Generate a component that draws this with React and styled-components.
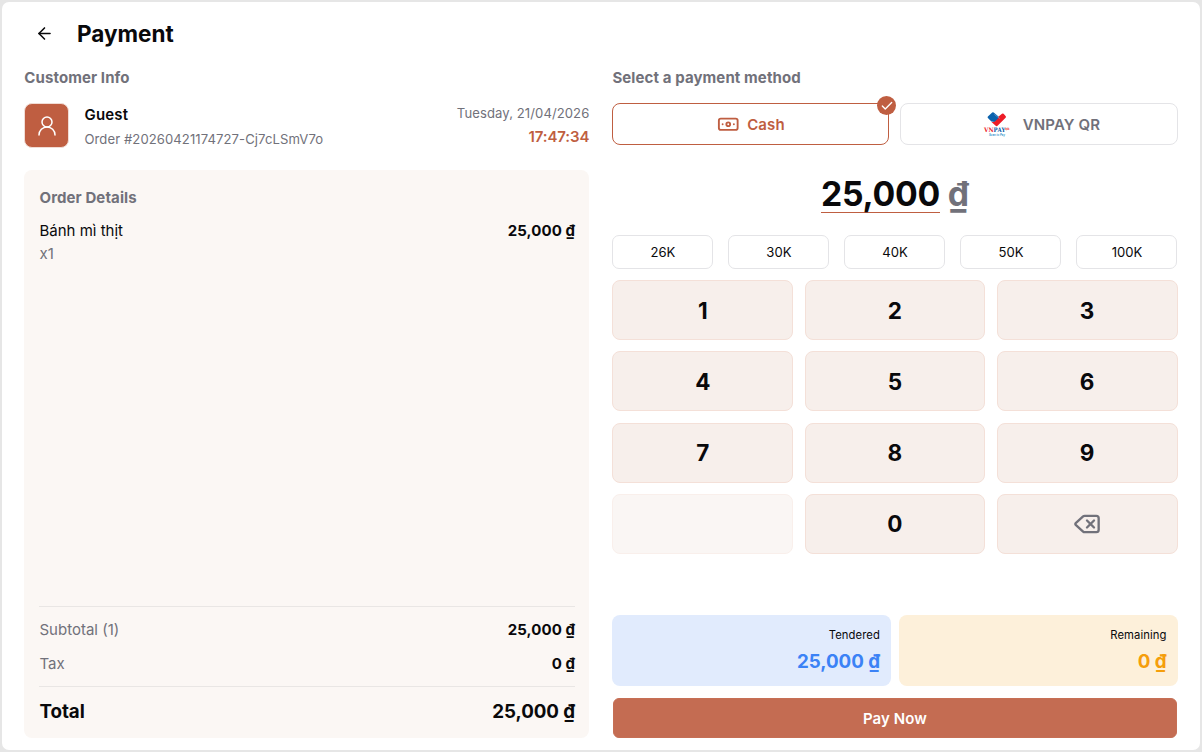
import styled, { createGlobalStyle } from "styled-components";
import { ArrowLeft, Banknote, Check, Delete, UserRound } from "lucide-react";

const GlobalStyle = createGlobalStyle`
  * {
    box-sizing: border-box;
  }
  body {
    margin: 0;
    background: #e6e6e6;
    font-family: Inter, "Liberation Sans", sans-serif;
    color: #09090b;
  }
  button {
    font-family: inherit;
    color: inherit;
    padding: 0;
  }
`;

const Page = styled.main`
  height: 752px;
  padding: 1.5px 2px 2px 1.5px;
`;

const Panel = styled.div`
  height: 100%;
  padding: 0 22.5px 12px 22.8px;
  border-radius: 7px;
  background: #fff;
  display: flex;
  flex-direction: column;
`;

const Header = styled.header`
  height: 64.5px;
  padding-left: 11px;
  display: flex;
  align-items: center;
  gap: 22.7px;
`;

const BackButton = styled.button`
  display: flex;
  border: 0;
  background: none;
`;

const Title = styled.h1`
  margin: 0;
  font-size: 22.5px;
  line-height: 30px;
  font-weight: 700;
`;

const Columns = styled.div`
  flex: 1;
  min-height: 0;
  display: grid;
  grid-template-columns: 1fr 1fr;
  gap: 23px;
`;

const Column = styled.section`
  display: flex;
  flex-direction: column;
  min-width: 0;
`;

const SectionTitle = styled.h2`
  margin: 0;
  font-size: 15px;
  line-height: 23px;
  font-weight: 700;
  letter-spacing: 0.1px;
  color: #71717a;
`;

const Customer = styled.div`
  display: flex;
  align-items: center;
  margin-top: 14px;
  height: 45px;
`;

const Avatar = styled.div`
  width: 45px;
  height: 45px;
  border: 1px solid #f1dcd5;
  border-radius: 8px;
  background: #bf5e41;
  color: #fff;
  display: flex;
  align-items: center;
  justify-content: center;
`;

const CustomerText = styled.div`
  margin-left: 15.2px;
  padding-top: 2px;
  flex: 1;
`;

const Stamp = styled.div`
  text-align: right;
  margin-top: -1px;
`;

const Strong = styled.div`
  font-size: 15px;
  line-height: 24px;
  font-weight: 600;
  letter-spacing: ${({ $accent }) => ($accent ? "-0.1px" : "0.2px")};
  color: ${({ $accent }) => ($accent ? "#bf5e41" : "inherit")};
`;

const Muted = styled.div`
  font-size: 13.1px;
  line-height: 24px;
  letter-spacing: 0.08px;
  color: #71717a;
`;

const OrderCard = styled.div`
  flex: 1;
  margin-top: 22px;
  padding: 15.5px 14.3px 13px 15.2px;
  border-radius: 8px;
  background: #fbf7f4;
  display: flex;
  flex-direction: column;
`;

const Items = styled.div`
  flex: 1;
  margin-top: 11px;
`;

const Line = styled.div`
  display: flex;
  justify-content: space-between;
  font-size: 15px;
  line-height: 22.5px;
  color: ${({ $muted }) => ($muted ? "#71717a" : "inherit")};
`;

const Amount = styled.span`
  font-weight: 700;
  letter-spacing: 0.1px;
  color: #09090b;
`;

const Quantity = styled.div`
  margin-top: 1px;
  font-size: 15px;
  line-height: 22.5px;
  color: #71717a;
`;

const Summary = styled.div`
  border-top: 1px solid #e9e6e4;
  padding: 12px 0 11px;
  display: grid;
  gap: 11.5px;
`;

const Total = styled.div`
  border-top: 1px solid #e9e6e4;
  padding-top: 11px;
  display: flex;
  justify-content: space-between;
  font-size: 18.75px;
  line-height: 27px;
  font-weight: 700;
  letter-spacing: -0.05px;
`;

const Methods = styled.div`
  display: grid;
  grid-template-columns: 1fr 1fr;
  gap: 11px;
  margin-top: 14px;
`;

const Method = styled.button`
  position: relative;
  height: 42px;
  border: 1px solid ${({ $active }) => ($active ? "#bf5e41" : "#e4e4e7")};
  border-radius: 8px;
  background: #fff;
  color: ${({ $active }) => ($active ? "#bf5e41" : "#71717a")};
  font-size: 15px;
  font-weight: 600;
  letter-spacing: 0.12px;
  display: flex;
  align-items: center;
  justify-content: center;
  gap: 7.5px;
`;

const Tick = styled.span`
  position: absolute;
  top: -8px;
  right: -8px;
  width: 19px;
  height: 19px;
  border-radius: 50%;
  background: #bf5e41;
  color: #fff;
  display: flex;
  align-items: center;
  justify-content: center;
`;

const AmountDisplay = styled.div`
  display: flex;
  align-items: flex-start;
  justify-content: center;
  gap: 8px;
  margin-top: 28px;
  height: 62px;
  font-size: 33.75px;
  line-height: 41px;
  font-weight: 700;
  letter-spacing: -0.3px;
`;

const Typed = styled.span`
  height: 40px;
  border-bottom: 1px solid #bf5e41;
`;

const Currency = styled.span`
  color: #71717a;
`;

const QuickRow = styled.div`
  display: grid;
  grid-template-columns: repeat(5, 1fr);
  gap: 15px;
`;

const Quick = styled.button`
  height: 34px;
  border: 1px solid #e4e4e7;
  border-radius: 7px;
  background: #fff;
  font-size: 13.1px;
`;

const Keypad = styled.div`
  display: grid;
  grid-template-columns: repeat(3, 1fr);
  gap: 11.3px;
  margin-top: 11px;
`;

const Key = styled.button`
  height: 60px;
  border: 1px solid #f4e0d8;
  border-radius: 8px;
  background: #f7efeb;
  font-size: 22.5px;
  font-weight: 700;
  opacity: ${({ disabled }) => (disabled ? 0.5 : 1)};
  display: flex;
  align-items: center;
  justify-content: center;
`;

const Tiles = styled.div`
  margin-top: auto;
  display: grid;
  grid-template-columns: 1fr 1fr;
  gap: 8px;
`;

const Tile = styled.div`
  height: 71px;
  padding: 9px 11px;
  border-radius: 8px;
  text-align: right;
  background: ${({ $background }) => $background};
`;

const TileLabel = styled.div`
  font-size: 11.25px;
  line-height: 22px;
  letter-spacing: 0.08px;
`;

const TileValue = styled.div`
  font-size: 18.75px;
  line-height: 32px;
  font-weight: 700;
  letter-spacing: -0.05px;
  color: ${({ $color }) => $color};
`;

const PayButton = styled.button`
  height: 40px;
  margin: 12px 1px 0;
  border: 1px solid #c66f55;
  border-radius: 6px;
  background: #c46c52;
  color: #fff;
  font-size: 15px;
  font-weight: 600;
  letter-spacing: 0.1px;
`;

function VnpayLogo() {
  return (
    <svg width="37.5" height="27" viewBox="-6 0 37.5 27">
      <path
        d="M3.9 5.6 8.2 1.6Q8.9 1 9.7 1.6L14.5 5.4 16.2 7.2 12.2 10.2Q10.6 11.3 9.2 10.8L7.4 10.6 3.9 7Q3.2 6.3 3.9 5.6Z"
        fill="#0b62ad"
      />
      <path
        d="M7.2 10.7Q9.2 11.6 11.2 10.2L14 7.6 14.6 5.5 18 2.7Q18.8 2.1 19.6 2.8L21.8 5.3Q22.3 6 21.6 6.7L13.8 14.6Q12.6 15.7 11.4 14.6Z"
        fill="#ed1c27"
      />
      <path d="M10.4 3.4 15.8 7.6" stroke="#7fb2dd" strokeWidth="0.6" />
      <g fontFamily="DejaVu Serif, serif" fontWeight="700">
        <text x="0" y="21.3" fontSize="6.2" textLength="9.8" lengthAdjust="spacingAndGlyphs" fill="#ed1c27">
          VN
        </text>
        <text x="9.6" y="21.3" fontSize="6.2" textLength="11.8" lengthAdjust="spacingAndGlyphs" fill="#0b5ba8">
          PAY
        </text>
        <text x="21" y="19" fontSize="3" textLength="4.6" lengthAdjust="spacingAndGlyphs" fill="#ed1c27">
          QR
        </text>
      </g>
      <text
        x="5"
        y="25.2"
        fontFamily="Liberation Sans, sans-serif"
        fontSize="3.8"
        fontWeight="700"
        fontStyle="italic"
        textLength="16"
        lengthAdjust="spacingAndGlyphs"
        fill="#2c8fc9"
      >
        Scan to Pay
      </text>
    </svg>
  );
}

const quickAmounts = ["26K", "30K", "40K", "50K", "100K"];
const digits = [1, 2, 3, 4, 5, 6, 7, 8, 9];

function OrderPanel() {
  return (
    <Column>
      <SectionTitle>Customer Info</SectionTitle>
      <Customer>
        <Avatar>
          <UserRound size={24} strokeWidth={1.5} />
        </Avatar>
        <CustomerText>
          <Strong>Guest</Strong>
          <Muted>Order #20260421174727-Cj7cLSmV7o</Muted>
        </CustomerText>
        <Stamp>
          <Muted>Tuesday, 21/04/2026</Muted>
          <Strong $accent>17:47:34</Strong>
        </Stamp>
      </Customer>
      <OrderCard>
        <SectionTitle>Order Details</SectionTitle>
        <Items>
          <Line>
            <span>Bánh mì thịt</span>
            <Amount>25,000 ₫</Amount>
          </Line>
          <Quantity>x1</Quantity>
        </Items>
        <Summary>
          <Line $muted>
            <span>Subtotal (1)</span>
            <Amount>25,000 ₫</Amount>
          </Line>
          <Line $muted>
            <span>Tax</span>
            <Amount>0 ₫</Amount>
          </Line>
        </Summary>
        <Total>
          <span>Total</span>
          <span>25,000 ₫</span>
        </Total>
      </OrderCard>
    </Column>
  );
}

function PaymentPanel() {
  return (
    <Column>
      <SectionTitle>Select a payment method</SectionTitle>
      <Methods>
        <Method $active>
          <Banknote size={22.5} />
          Cash
          <Tick>
            <Check size={14} strokeWidth={2.3} />
          </Tick>
        </Method>
        <Method>
          <VnpayLogo />
          VNPAY QR
        </Method>
      </Methods>
      <AmountDisplay>
        <Typed>25,000</Typed>
        <Currency>₫</Currency>
      </AmountDisplay>
      <QuickRow>
        {quickAmounts.map((amount) => (
          <Quick key={amount}>{amount}</Quick>
        ))}
      </QuickRow>
      <Keypad>
        {digits.map((digit) => (
          <Key key={digit}>{digit}</Key>
        ))}
        <Key disabled />
        <Key>0</Key>
        <Key aria-label="Delete">
          <Delete size={28} color="#71717a" />
        </Key>
      </Keypad>
      <Tiles>
        <Tile $background="#e1ebfd">
          <TileLabel>Tendered</TileLabel>
          <TileValue $color="#3b82f6">25,000 ₫</TileValue>
        </Tile>
        <Tile $background="#fdf0da">
          <TileLabel>Remaining</TileLabel>
          <TileValue $color="#f59e0b">0 ₫</TileValue>
        </Tile>
      </Tiles>
      <PayButton>Pay Now</PayButton>
    </Column>
  );
}

function App() {
  return (
    <Page>
      <GlobalStyle />
      <Panel>
        <Header>
          <BackButton aria-label="Back">
            <ArrowLeft size={19} />
          </BackButton>
          <Title>Payment</Title>
        </Header>
        <Columns>
          <OrderPanel />
          <PaymentPanel />
        </Columns>
      </Panel>
    </Page>
  );
}

export default App;
